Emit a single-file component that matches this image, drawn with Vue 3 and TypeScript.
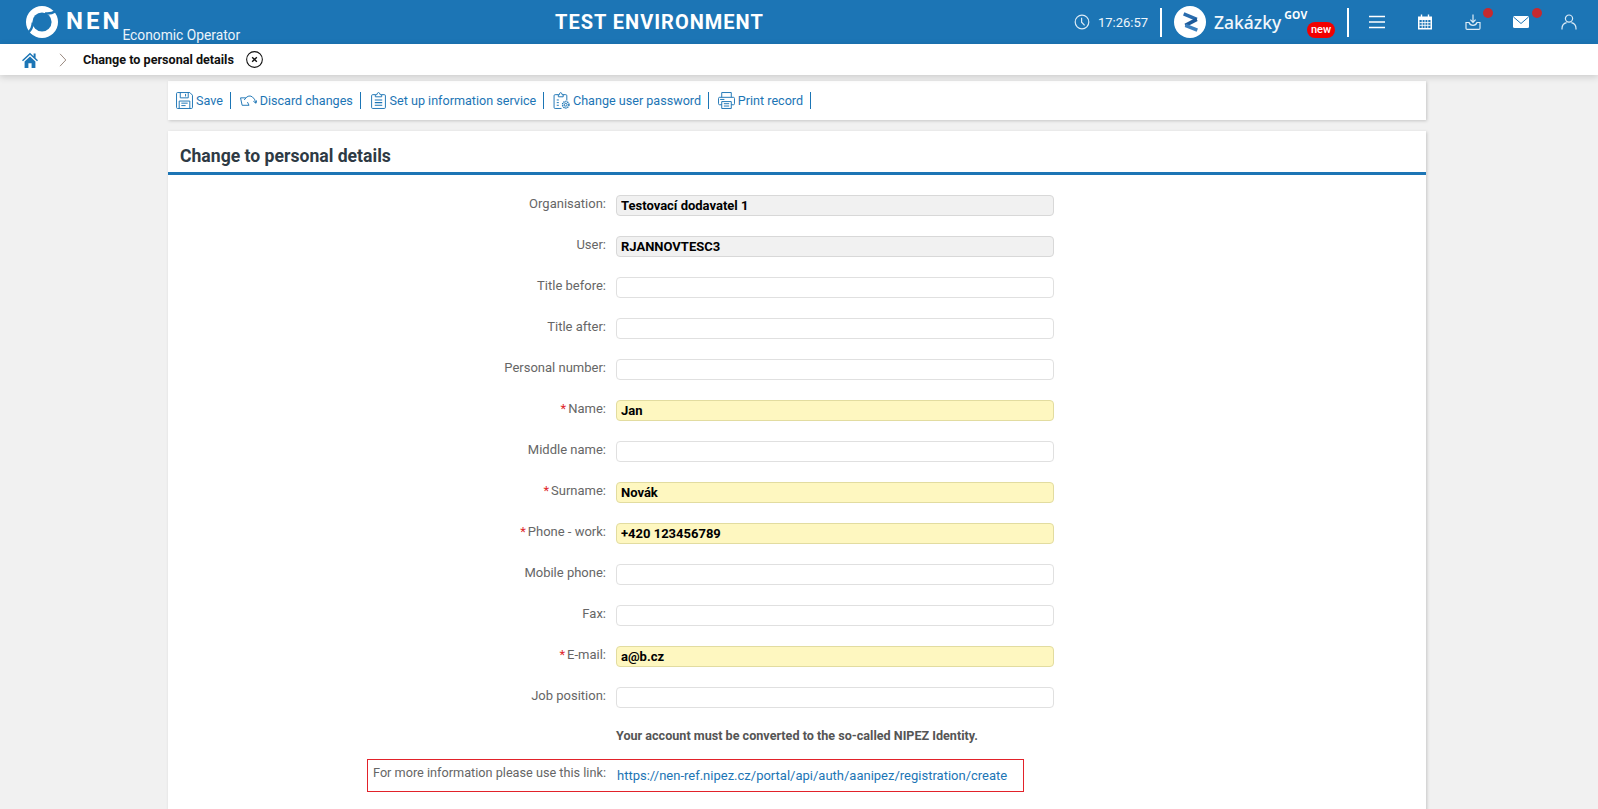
<template>
  <div class="page">
    <header class="topbar">
      <div class="brand">
        <svg class="logo" viewBox="0 0 32 32" width="32" height="32">
          <circle cx="16" cy="16" r="16" fill="#fff" />
          <circle cx="16" cy="16" r="9.6" fill="#1c75b5" />
          <path d="M29 5.5Q25.5 8 19 7.4" fill="none" stroke="#1c75b5" stroke-width="2.4" />
          <path d="M2.6 26Q6.4 23 6.8 16.5" fill="none" stroke="#1c75b5" stroke-width="2.4" />
        </svg>
        <span class="brand-name">NEN</span>
        <span class="brand-sub">Economic Operator</span>
      </div>
      <div class="env">TEST ENVIRONMENT</div>
      <div class="top-right">
        <svg class="clock" viewBox="0 0 16 16" width="16" height="16" fill="none" stroke="#dcebf6" stroke-width="1.2">
          <circle cx="8" cy="8" r="6.8" />
          <path d="M7.6 3.8V8.2L10.6 11.4" />
        </svg>
        <span class="time">17:26:57</span>
        <span class="vline"></span>
        <div class="zak">
          <span class="zak-circle">
            <svg viewBox="0 0 13 17" width="15" height="20" fill="none" stroke-width="3">
              <path d="M0.6 1.5L12 6.2" stroke="#2a6cae" />
              <path d="M12 6.2L2 11.4" stroke="#1d5a9a" />
              <path d="M2 11.4L12.4 15.6" stroke="#3d80be" />
            </svg>
          </span>
          <span class="zak-text">Zakázky</span>
          <span class="zak-gov">GOV</span>
          <span class="zak-new">new</span>
        </div>
        <span class="vline second"></span>
        <div class="top-icons">
          <svg viewBox="0 0 16 14" width="16" height="14" fill="none" stroke="#fff" stroke-width="1.6">
            <path d="M0 1.5H16M0 7H16M0 12.5H16" />
          </svg>
          <svg viewBox="0 0 16 16" width="16" height="16">
            <path d="M1 2.5H15V15.5H1Z" fill="#fff" />
            <path d="M4.5 0.5V4M11.5 0.5V4" stroke="#fff" stroke-width="1.4" />
            <path d="M2.5 6H13.5V14H2.5Z" fill="#1c75b5" />
            <path d="M2.5 8.6H13.5M2.5 11.3H13.5M5.2 6V14M8 6V14M10.8 6V14" stroke="#fff" stroke-width="0.9" />
          </svg>
          <span class="with-dot">
            <svg viewBox="0 0 16 16" width="16" height="16" fill="none" stroke="#dcebf6" stroke-width="1.2">
              <path d="M8 0.5V8M5.4 5.6L8 8.4L10.6 5.6" />
              <path d="M4 8.5H1V14.2Q1 15.4 2.2 15.4H13.8Q15 15.4 15 14.2V8.5H12Q11 11.4 8 11.4Q5 11.4 4 8.5Z" />
            </svg>
            <i class="dot"></i>
          </span>
          <span class="with-dot">
            <svg viewBox="0 0 16 12" width="16" height="12">
              <path d="M0 1.5Q0 0 1.5 0H14.5Q16 0 16 1.5V10.5Q16 12 14.5 12H1.5Q0 12 0 10.5Z" fill="#fff" />
              <path d="M0.5 1L8 7.5L15.5 1" fill="none" stroke="#1c75b5" stroke-width="1" />
            </svg>
            <i class="dot mail"></i>
          </span>
          <svg viewBox="0 0 16 16" width="16" height="16" fill="none" stroke="#dcebf6" stroke-width="1.2">
            <circle cx="8" cy="4.6" r="3.6" />
            <path d="M1 15.6V14.6Q1 9.6 5.6 8.6M15 15.6V14.6Q15 9.6 10.4 8.6" />
          </svg>
        </div>
      </div>
    </header>

    <nav class="crumbs">
      <svg class="home" viewBox="0 0 16 16" width="16" height="16">
        <path d="M8 0.8L0 8.2L1 9.2L8 2.8L15 9.2L16 8.2L13.6 6V1.6H11.6V4.2Z" fill="#1c75b5" />
        <path d="M2.6 9.4L8 4.4L13.4 9.4V16H9.6V11.2H6.4V16H2.6Z" fill="#1c75b5" />
      </svg>
      <svg class="chev" viewBox="0 0 8 14" width="8" height="14" fill="none" stroke="#9a8a80" stroke-width="1">
        <path d="M1 0.8L6.8 7L1 13.2" />
      </svg>
      <span class="crumb-title">Change to personal details</span>
      <svg class="close" viewBox="0 0 16 16" width="17" height="17" fill="none" stroke="#111" stroke-width="1">
        <circle cx="8" cy="8" r="7.4" />
        <path d="M5.8 5.8L10.2 10.2M10.2 5.8L5.8 10.2" stroke-width="1.3" />
      </svg>
    </nav>

    <main class="content">
      <div class="toolbar">
        <a v-for="action in actions" :key="action.label" class="tool">
          <svg viewBox="0 0 16 16" width="17" height="17" fill="none" stroke="#1c75b5" stroke-width="0.9" v-html="action.icon"></svg>
          <span>{{ action.label }}</span>
        </a>
      </div>

      <section class="card">
        <h1 class="card-title">Change to personal details</h1>
        <form class="form">
          <div v-for="field in fields" :key="field.label" class="row">
            <label class="label"><span v-if="field.required" class="req">*</span>{{ field.label }}:</label>
            <input
              class="input"
              :class="{ locked: field.locked, required: field.required }"
              type="text"
              :value="field.value"
              readonly
            >
          </div>
          <div class="note">Your account must be converted to the so-called NIPEZ Identity.</div>
          <div class="link-row">
            <span class="link-label">For more information please use this link:</span>
            <a class="link">https://nen-ref.nipez.cz/portal/api/auth/aanipez/registration/create</a>
          </div>
        </form>
      </section>
    </main>
  </div>
</template>

<script setup lang="ts">
interface Field {
  label: string
  value?: string
  required?: boolean
  locked?: boolean
}

const actions = [
  {
    label: 'Save',
    icon: '<path d="M0.5 1.5Q0.5 0.5 1.5 0.5H13L15.5 3V14.5Q15.5 15.5 14.5 15.5H1.5Q0.5 15.5 0.5 14.5Z"/><path d="M4 0.5V5.5H11.5V0.5M9 1.8V4.2M3 15.5V8.5H13V15.5M5 10.5H11M5 12.8H9"/>'
  },
  {
    label: 'Discard changes',
    icon: '<path d="M0.5 5.5H5.5M0.5 5.5L2 12.5H8.5L7 9.5"/><path d="M4 7.5Q7.5 2 11.5 4.5Q14 6 15 10.5M15 10.5L12.6 8.8M15 10.5L15.8 7.8"/>'
  },
  {
    label: 'Set up information service',
    icon: '<path d="M5 2.5H2.5Q1.5 2.5 1.5 3.5V14.5Q1.5 15.5 2.5 15.5H13.5Q14.5 15.5 14.5 14.5V3.5Q14.5 2.5 13.5 2.5H11"/><path d="M5 4.5V2.5H6.5Q6.8 0.5 8 0.5Q9.2 0.5 9.5 2.5H11V4.5Z"/><path d="M4.5 7.5H11.5M4.5 10H11.5M4.5 12.5H11.5" stroke-width="1.1"/>'
  },
  {
    label: 'Change user password',
    icon: '<path d="M5 2.5H2Q1 2.5 1 3.5V14.5Q1 15.5 2 15.5H8M13 8V3.5Q13 2.5 12 2.5H9.5"/><path d="M5 4.5V2.5H6Q6.2 0.5 7.2 0.5Q8.3 0.5 8.6 2.5H9.6V4.5Z"/><path d="M3.5 7.5H5.5M3.5 10H5.5M3.5 12.5H5.5"/><circle cx="12" cy="12" r="1.3"/><circle cx="12" cy="12" r="3" stroke-dasharray="1.2 0.7" stroke-width="1.4"/>'
  },
  {
    label: 'Print record',
    icon: '<path d="M3.5 5V0.5H12.5V5"/><path d="M3.5 12H1.5Q0.5 12 0.5 11V6Q0.5 5 1.5 5H14.5Q15.5 5 15.5 6V11Q15.5 12 14.5 12H12.5"/><path d="M3.5 9H12.5V15.5H3.5Z"/><path d="M5.5 11H10.5M5.5 13.2H10.5M2 7H6"/>'
  }
]

const fields: Field[] = [
  { label: 'Organisation', value: 'Testovací dodavatel 1', locked: true },
  { label: 'User', value: 'RJANNOVTESC3', locked: true },
  { label: 'Title before' },
  { label: 'Title after' },
  { label: 'Personal number' },
  { label: 'Name', value: 'Jan', required: true },
  { label: 'Middle name' },
  { label: 'Surname', value: 'Novák', required: true },
  { label: 'Phone - work', value: '+420 123456789', required: true },
  { label: 'Mobile phone' },
  { label: 'Fax' },
  { label: 'E-mail', value: 'a@b.cz', required: true },
  { label: 'Job position' }
]
</script>

<style>
html,
body {
  margin: 0;
  height: 100%;
  overflow: hidden;
  background: #f1f1f1;
}
</style>

<style scoped>
.page {
  height: 809px;
  overflow: hidden;
  font-family: Roboto, sans-serif;
  font-size: 13px;
  background: #f1f1f1;
}

.topbar {
  height: 44px;
  background: #1c75b5;
  color: #fff;
  display: flex;
  align-items: center;
  position: relative;
}

.brand {
  display: flex;
  align-items: center;
  padding-left: 26px;
  height: 44px;
}

.brand-name {
  margin-left: 8px;
  margin-top: -3px;
  font-size: 24px;
  font-weight: 700;
  letter-spacing: 3px;
}

.brand-sub {
  margin-left: 0;
  margin-top: 25px;
  font-size: 13.8px;
  color: #eaf3fa;
}

.env {
  position: absolute;
  left: 555px;
  top: 10px;
  font-size: 20px;
  font-weight: 700;
  letter-spacing: 1px;
}

.top-right {
  margin-left: auto;
  display: flex;
  align-items: center;
  height: 44px;
}

.clock {
  margin-right: 8px;
}

.time {
  font-size: 13px;
  color: #eef5fb;
  width: 49px;
  white-space: nowrap;
}

.vline {
  width: 2px;
  height: 29px;
  background: #fff;
  margin-left: 13px;
}

.vline.second {
  margin-left: 0;
}

.zak {
  width: 185px;
  padding-left: 12px;
  box-sizing: border-box;
  display: flex;
  align-items: center;
  position: relative;
  height: 44px;
}

.zak-circle {
  width: 32px;
  height: 32px;
  border-radius: 50%;
  background: #fff;
  display: flex;
  align-items: center;
  justify-content: center;
}

.zak-text {
  margin-left: 8px;
  font-family: 'Noto Sans', sans-serif;
  font-size: 17.5px;
  font-weight: 500;
  color: #f1f7fb;
}

.zak-gov {
  margin-left: 3px;
  margin-top: -15px;
  font-family: 'Noto Sans', sans-serif;
  font-size: 10.5px;
  font-weight: 700;
  letter-spacing: 0.3px;
}

.zak-new {
  position: absolute;
  left: 145px;
  top: 22px;
  width: 28px;
  height: 16px;
  border-radius: 8px;
  background: #f20000;
  font-size: 11px;
  font-weight: 500;
  line-height: 15px;
  text-align: center;
}

.top-icons {
  display: flex;
  align-items: center;
  gap: 32px;
  padding-left: 20px;
  padding-right: 21px;
}

.top-icons svg {
  display: block;
}

.with-dot {
  position: relative;
  display: block;
}

.dot {
  position: absolute;
  left: 18px;
  top: -6px;
  width: 10px;
  height: 10px;
  border-radius: 50%;
  background: #c62a2f;
}

.dot.mail {
  left: 19px;
  top: -8px;
}

.crumbs {
  height: 31px;
  background: #fff;
  box-shadow: 0 2px 7px rgba(0, 0, 0, 0.16);
  display: flex;
  align-items: center;
  padding-left: 22px;
  position: relative;
}

.chev {
  margin-left: 21px;
}

.crumb-title {
  margin-left: 16px;
  font-size: 12.6px;
  font-weight: 700;
  color: #111;
}

.close {
  margin-left: 12px;
}

.content {
  width: 1258px;
  margin-left: 168px;
  padding-top: 6px;
}

.toolbar {
  height: 39px;
  background: #fff;
  box-shadow: 1px 1px 3px rgba(0, 0, 0, 0.18);
  display: flex;
  align-items: center;
  padding-left: 8px;
}

.tool {
  display: flex;
  align-items: center;
  gap: 3px;
  height: 17px;
  padding-right: 7px;
  margin-right: 8.7px;
  border-right: 1px solid #1c75b5;
  color: #1c75b5;
  font-size: 12.6px;
  white-space: nowrap;
}

.card {
  margin-top: 11px;
  height: 700px;
  background: #fff;
  box-shadow: 1px 1px 3px rgba(0, 0, 0, 0.18);
}

.card-title {
  margin: 0;
  height: 44px;
  box-sizing: border-box;
  padding: 15px 0 0 12px;
  border-bottom: 3px solid #1c75b5;
  font-size: 17.6px;
  font-weight: 700;
  line-height: 21px;
  color: #2e3a44;
}

.form {
  padding-top: 20px;
}

.row {
  display: flex;
  align-items: center;
  height: 21px;
  margin-bottom: 20px;
}

.label {
  width: 438px;
  text-align: right;
  color: #666;
  margin-top: -5px;
  white-space: nowrap;
}

.req {
  color: #e0272b;
  margin-right: 2px;
}

.input {
  margin-left: 10px;
  width: 438px;
  height: 21px;
  box-sizing: border-box;
  padding: 0 4px;
  border: 1px solid #e0e0e0;
  border-radius: 4px;
  background: #fff;
  font-family: Roboto, sans-serif;
  font-size: 13px;
  font-weight: 700;
  color: #000;
  outline: none;
}

.input.locked {
  background: #f1f1f1;
  border-color: #d8d8d8;
}

.input.required {
  background: #fef7c0;
  border-color: #e2dca0;
}

.note {
  margin-left: 448px;
  margin-top: 12px;
  color: #555;
  font-weight: 700;
  font-size: 12.6px;
  line-height: 15px;
}

.link-row {
  margin-left: 199px;
  margin-top: 16px;
  width: 657px;
  height: 33px;
  box-sizing: border-box;
  border: 1px solid #e2222a;
  display: flex;
  align-items: center;
}

.link-label {
  width: 239px;
  box-sizing: border-box;
  padding-left: 5px;
  color: #666;
  font-size: 12.7px;
  margin-top: -6px;
  white-space: nowrap;
}

.link {
  margin-left: 10px;
  margin-top: -1px;
  color: #1c75b5;
  white-space: nowrap;
}
</style>
